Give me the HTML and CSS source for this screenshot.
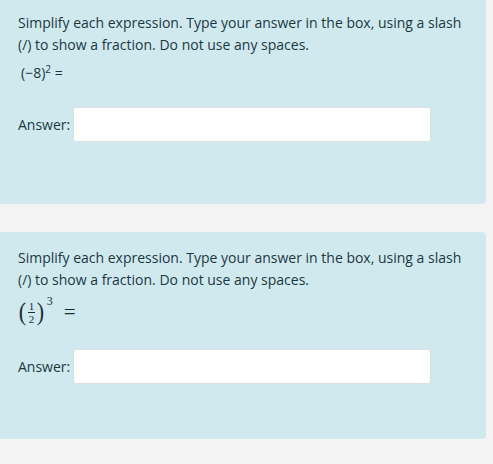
FILE: index.html
```html
<!DOCTYPE html>
<html>
<head>
<meta charset="utf-8">
<link rel="stylesheet" href="styles.css">
</head>
<body>
<div class="page">
  <div class="card first">
    <p class="prompt">Simplify each expression. Type your answer in the box, using a slash (/) to show a fraction. Do not use any spaces.</p>
    <div class="expr plain">(&minus;8)<sup>2</sup> =</div>
    <div class="answer"><label>Answer:</label><input type="text" class="box"></div>
  </div>
  <div class="card second">
    <p class="prompt">Simplify each expression. Type your answer in the box, using a slash (/) to show a fraction. Do not use any spaces.</p>
    <div class="expr math"><span class="paren">(</span><span class="frac"><span class="num">1</span><span class="den">2</span></span><span class="paren">)</span><sup class="exp">3</sup><span class="eq">=</span></div>
    <div class="answer"><label>Answer:</label><input type="text" class="box"></div>
  </div>
</div>
</body>
</html>
```
FILE: styles.css
```css
html, body {
  margin: 0;
  padding: 0;
  background: #f4f4f4;
}
.page {
  width: 486px;
  display: flex;
  flex-direction: column;
  gap: 28px;
  margin-top: -4px;
}
.card {
  background: #d0e9ef;
  border-radius: 0 4px 4px 0;
  padding: 16px 18px 0 18px;
  font-family: "Open Sans", sans-serif;
  font-size: 14px;
  color: #1c383f;
  box-sizing: border-box;
}
.first { height: 208px; }
.second { height: 207px; padding-top: 15px; }
.prompt {
  margin: 0;
  line-height: 22px;
}
.expr.plain {
  margin-top: 7px;
  padding-left: 3px;
  font-size: 14px;
  line-height: 20px;
}
.expr.plain sup {
  font-size: 10px;
  vertical-align: 5px;
  line-height: 0;
}
.expr.math {
  margin-top: 6px;
  display: flex;
  align-items: center;
  font-family: "Liberation Serif", serif;
  font-size: 17px;
  height: 30px;
  color: #1a2f33;
}
.paren {
  font-size: 26px;
  line-height: 1;
  transform: scaleX(0.85);
}
.frac {
  display: inline-flex;
  flex-direction: column;
  align-items: center;
  font-size: 11px;
  line-height: 12px;
  margin: 0 1px;
}
.frac .num {
  border-bottom: 1px solid #1a2f33;
  padding: 0 1px;
}
.exp {
  font-size: 12px;
  align-self: flex-start;
  line-height: 12px;
  margin-left: 2px;
  margin-top: -2px;
}
.eq {
  margin-left: 11px;
  font-size: 21px;
}
.answer {
  display: flex;
  align-items: center;
  gap: 3px;
}
.first .answer { margin-top: 24px; }
.second .answer { margin-top: 22px; }
.answer label {
  line-height: 20px;
}
.box {
  width: 358px;
  height: 35px;
  box-sizing: border-box;
  border: 1px solid #dcdfe0;
  border-radius: 3px;
  background: #fff;
  margin: 0;
  padding: 0 8px;
}
```
